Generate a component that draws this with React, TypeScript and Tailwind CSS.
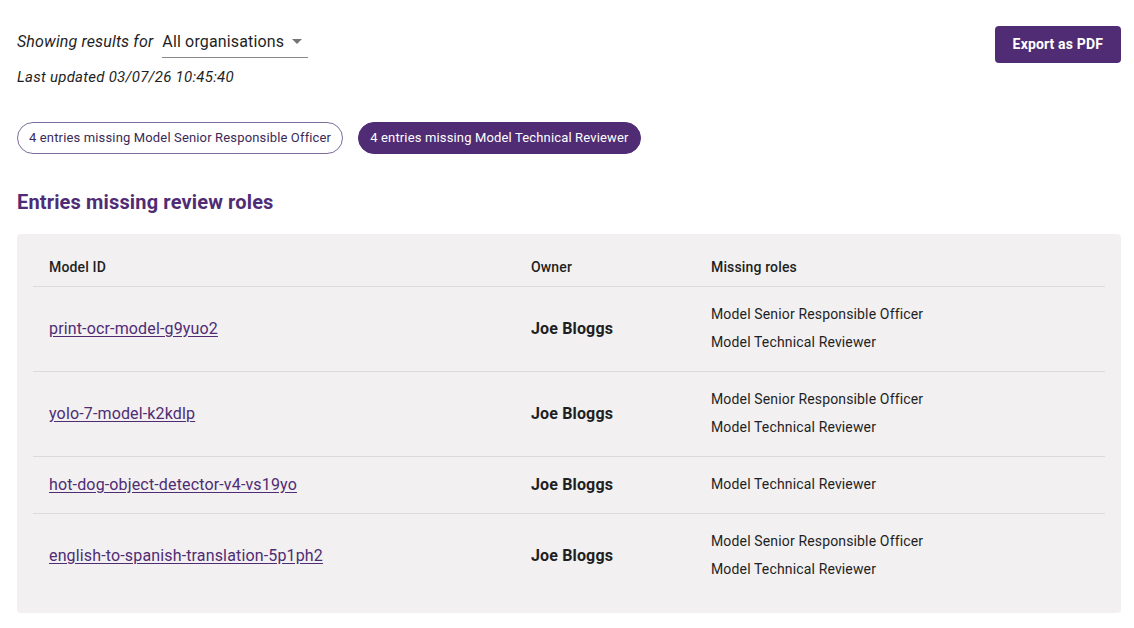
import { useState } from "react"

interface IEntry {
  id: string
  owner: string
  missing: string[]
}

const entries: IEntry[] = [
  { id: "print-ocr-model-g9yuo2", owner: "Joe Bloggs", missing: ["Model Senior Responsible Officer", "Model Technical Reviewer"] },
  { id: "yolo-7-model-k2kdlp", owner: "Joe Bloggs", missing: ["Model Senior Responsible Officer", "Model Technical Reviewer"] },
  { id: "hot-dog-object-detector-v4-vs19yo", owner: "Joe Bloggs", missing: ["Model Technical Reviewer"] },
  { id: "english-to-spanish-translation-5p1ph2", owner: "Joe Bloggs", missing: ["Model Senior Responsible Officer", "Model Technical Reviewer"] },
]

export default function App() {
  const [active, setActive] = useState<'sro' | 'tech'>('tech')

  return (
    <div className="min-h-screen bg-white pl-[17px] pr-[13px] pt-[26px] tracking-[0.15px] text-[#1f1f1f] font-['Roboto',sans-serif]">
      <div className="flex items-start justify-between">
        <div>
          <div className="flex h-[32px] items-center">
            <span className="text-[16px] italic text-[#1f1f1f]">Showing results for</span>
            <div className="ml-[9px] flex h-[32px] w-[146px] items-center justify-between border-b border-[#8a8a8a] pr-[6px]">
              <span className="text-[16px] text-[#1f1f1f]">All organisations</span>
              <span className="h-0 w-0 border-x-[5px] border-t-[5px] border-x-transparent border-t-[#757575]" />
            </div>
          </div>
          <div className="mt-[8px] text-[15px] leading-[22px] italic tracking-[0.25px]">Last updated 03/07/26 10:45:40</div>
        </div>
        <button className="h-[37px] rounded-[4px] bg-[#4f2c74] px-[18px] text-[14px] font-bold text-white">
          Export as PDF
        </button>
      </div>

      <div className="mt-[34px] flex gap-[15px]">
        <button
          onClick={() => setActive('sro')}
          className={`h-[32px] rounded-full border px-[11px] text-[13px] ${
            active === 'sro' ? 'border-[#4f2c74] bg-[#4f2c74] text-white' : 'border-[#7d6c9c] bg-white text-[#3b2a57]'
          }`}
        >
          4 entries missing Model Senior Responsible Officer
        </button>
        <button
          onClick={() => setActive('tech')}
          className={`h-[32px] rounded-full border px-[11px] text-[13px] ${
            active === 'tech' ? 'border-[#4f2c74] bg-[#4f2c74] text-white' : 'border-[#7d6c9c] bg-white text-[#3b2a57]'
          }`}
        >
          4 entries missing Model Technical Reviewer
        </button>
      </div>

      <h2 className="mt-[34px] text-[20px] leading-[28px] font-bold text-[#4f2c74]">Entries missing review roles</h2>

      <div className="mt-[18px] rounded-[4px] bg-[#f2f0f1] px-[16px] pt-[16px] pb-[15px]">
        <div className="grid h-[37px] grid-cols-[482px_180px_1fr] items-center border-b border-[#dcdadb] pb-[2px] text-[14px] font-medium">
          <div className="px-[16px]">Model ID</div>
          <div className="px-[16px]">Owner</div>
          <div className="px-[16px]">Missing roles</div>
        </div>
        {entries.map((entry, index) => (
          <div
            key={entry.id}
            className={`grid grid-cols-[482px_180px_1fr] items-center pt-[14px] pb-[14px] ${
              index < entries.length - 1 ? 'border-b border-[#dcdadb]' : ''
            }`}
          >
            <div className="px-[16px]">
              <a href="#" className="text-[16px] text-[#4f2c74] underline underline-offset-2 decoration-[#4f2c74]">
                {entry.id}
              </a>
            </div>
            <div className="px-[16px] text-[16px] font-bold">{entry.owner}</div>
            <div className="-mt-[1px] mb-[1px] px-[16px] text-[14px]">
              {entry.missing.map((role) => (
                <div key={role} className="leading-[28px]">{role}</div>
              ))}
            </div>
          </div>
        ))}
      </div>
    </div>
  )
}
